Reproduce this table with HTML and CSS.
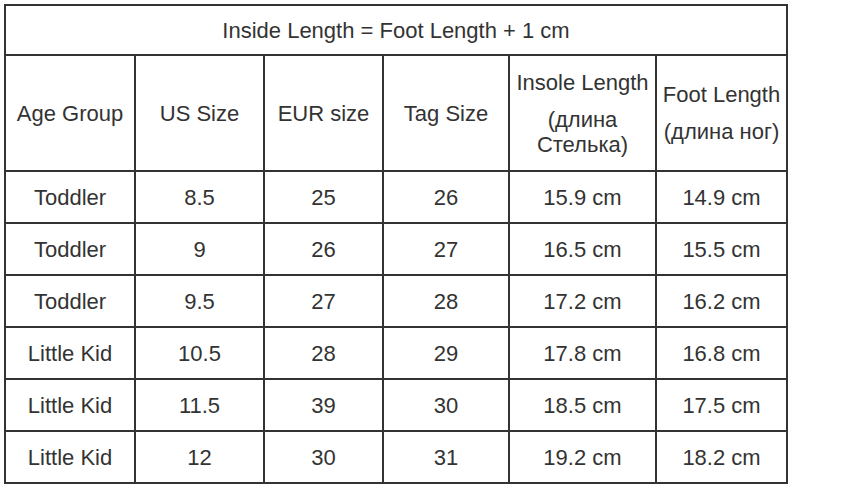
FILE: index.html
```html
<!DOCTYPE html>
<html>
<head>
<meta charset="utf-8">
<link rel="stylesheet" href="styles.css">
</head>
<body>
<table class="size-table">
  <colgroup>
    <col class="c1"><col class="c2"><col class="c3"><col class="c4"><col class="c5"><col class="c6">
  </colgroup>
  <tr class="title-row"><td colspan="6">Inside Length = Foot Length + 1 cm</td></tr>
  <tr class="head-row">
    <td>Age Group</td>
    <td>US Size</td>
    <td>EUR size</td>
    <td>Tag Size</td>
    <td><div class="para">Insole Length</div><div class="para second">(длина Стелька)</div></td>
    <td><div class="para">Foot Length</div><div class="para second">(длина ног)</div></td>
  </tr>
  <tr><td>Toddler</td><td>8.5</td><td>25</td><td>26</td><td>15.9 cm</td><td>14.9 cm</td></tr>
  <tr><td>Toddler</td><td>9</td><td>26</td><td>27</td><td>16.5 cm</td><td>15.5 cm</td></tr>
  <tr><td>Toddler</td><td>9.5</td><td>27</td><td>28</td><td>17.2 cm</td><td>16.2 cm</td></tr>
  <tr><td>Little Kid</td><td>10.5</td><td>28</td><td>29</td><td>17.8 cm</td><td>16.8 cm</td></tr>
  <tr><td>Little Kid</td><td>11.5</td><td>39</td><td>30</td><td>18.5 cm</td><td>17.5 cm</td></tr>
  <tr><td>Little Kid</td><td>12</td><td>30</td><td>31</td><td>19.2 cm</td><td>18.2 cm</td></tr>
</table>
</body>
</html>
```

FILE: styles.css
```css
html, body {
  margin: 0;
  padding: 0;
  background: #fff;
}
body {
  padding: 4px 0 0 4px;
  font-family: "Liberation Sans", Arial, sans-serif;
  font-size: 22px;
  color: #333;
}
.size-table {
  border-collapse: collapse;
  table-layout: fixed;
  width: 782px;
}
.c1 { width: 130px; }
.c2 { width: 129px; }
.c3 { width: 119px; }
.c4 { width: 126px; }
.c5 { width: 147px; }
.c6 { width: 131px; }
.size-table td {
  border: 2px solid #333;
  text-align: center;
  vertical-align: middle;
  padding: 0 2px;
  height: 52px;
  box-sizing: border-box;
  line-height: 25px;
}
.title-row td {
  height: 50px;
}
.head-row td {
  height: 116px;
}
.para.second {
  margin-top: 12px;
}
```
